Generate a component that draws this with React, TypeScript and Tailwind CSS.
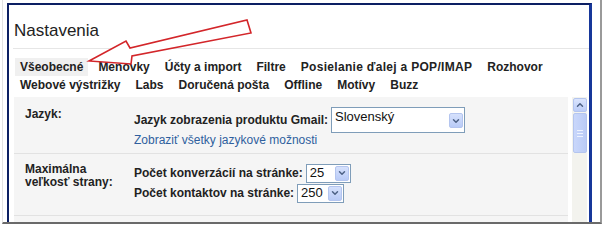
import { ChevronDown, ChevronUp } from 'lucide-react';

const tabRows = [
  ['Všeobecné', 'Menovky', 'Účty a import', 'Filtre', 'Posielanie ďalej a POP/IMAP', 'Rozhovor'],
  ['Webové výstrižky', 'Labs', 'Doručená pošta', 'Offline', 'Motívy', 'Buzz'],
];

const SelectBox = ({ value, className }: { value: string; className: string }) => (
  <div className={`flex justify-between items-center bg-white border border-[#7f9db9] pl-[3px] pr-[1px] ${className}`}>
    <span className="self-start font-normal text-[13px] leading-[16px] text-[#111]">{value}</span>
    <span className="flex items-center justify-center w-[14px] h-[15px] rounded-[2px] border border-[#b4c5ef] bg-gradient-to-b from-[#d6e1fc] to-[#b9cbf7]">
      <ChevronDown className="w-[10px] h-[10px] text-[#4d6185]" strokeWidth={3.5} />
    </span>
  </div>
);

const App = () => {
  return (
    <div className="w-[604px] h-[226px] bg-white pl-[2px] font-['Liberation_Sans',Arial,sans-serif] text-[#222]">
      <div className="relative w-[600px] h-[224px] border-l border-l-[#e2e2e2] border-r-2 border-r-[#9a9a9a] border-b-2 border-b-[#6a6a6a] pl-[4px] pt-[3px]">
        {/* window frame */}
        <div className="flex flex-col w-[585px] h-[219px] border-t-2 border-l-2 border-[#0c1f63] border-r-[3px] border-r-[#17379a] bg-white overflow-hidden">
          <h1 className="pl-[5px] pt-[16px] pb-[7px] text-[17px] leading-[20px] font-normal text-[#222]">Nastavenia</h1>
          <div className="ml-[4px] h-px bg-[#e6e6e6]" />

          {/* Tabs */}
          <div className="pl-[6px] pt-[9px] flex flex-col">
            {tabRows.map((row, i) => (
              <div key={i} className="flex gap-[5px] h-[18px] items-center">
                {row.map((tab) => (
                  <span
                    key={tab}
                    className={
                      'px-[5px] h-[18px] leading-[18px] text-[12px] font-bold whitespace-nowrap ' +
                      (tab === 'Všeobecné' ? 'bg-[#f0f0f0] ' : '') +
                      (tab.startsWith('Posielanie') ? 'tracking-[0.3px]' : '')
                    }
                  >
                    {tab}
                  </span>
                ))}
              </div>
            ))}
          </div>

          {/* Content + scrollbar */}
          <div className="mt-[3px] flex flex-1 min-h-0">
            <div className="ml-[5px] w-[554px] bg-[#f5f5f5] text-[12px] font-bold">
              {/* Jazyk */}
              <div className="flex pl-[11px] pt-[10px] pb-[6px] border-b border-[#e2e2e2]">
                <div className="w-[109px] leading-[14px]">Jazyk:</div>
                <div className="flex flex-col">
                  <div className="flex items-center gap-[3px]">
                    <span>Jazyk zobrazenia produktu Gmail:</span>
                    <SelectBox value="Slovenský" className="w-[134px] h-[26px] pt-px" />
                  </div>
                  <a className="font-normal leading-[14px] text-[#2f5f9e]">Zobraziť všetky jazykové možnosti</a>
                </div>
              </div>

              {/* Max page size */}
              <div className="flex pl-[11px] pt-[9px] pb-[12px] border-b border-[#e2e2e2]">
                <div className="w-[109px] leading-[13px]">
                  <div>Maximálna</div>
                  <div>veľkosť strany:</div>
                </div>
                <div className="flex flex-col">
                  <div className="flex items-center gap-[3px] h-[20px]">
                    <span>Počet konverzácií na stránke:</span>
                    <SelectBox value="25" className="w-[45px] h-[19px]" />
                  </div>
                  <div className="flex items-center gap-[3px] h-[20px]">
                    <span>Počet kontaktov na stránke:</span>
                    <SelectBox value="250" className="w-[47px] h-[19px]" />
                  </div>
                </div>
              </div>
            </div>

            {/* Scrollbar */}
            <div className="ml-[4px] w-[15px] bg-[#f3f3ee] flex flex-col items-center pt-px gap-px">
              <span className="flex items-center justify-center w-[14px] h-[14px] rounded-[2px] border border-[#b4c5ef] bg-gradient-to-b from-[#dbe5fd] to-[#bccdf8]">
                <ChevronUp className="w-[10px] h-[10px] text-[#4d6185]" strokeWidth={3.5} />
              </span>
              <span className="flex flex-col items-center justify-center gap-[2px] w-[14px] h-[40px] rounded-[2px] border border-[#b4c5ef] bg-gradient-to-r from-[#c9d7fb] to-[#bacbf6]">
                <span className="w-[6px] h-px bg-[#eef3ff]" />
                <span className="w-[6px] h-px bg-[#eef3ff]" />
                <span className="w-[6px] h-px bg-[#eef3ff]" />
              </span>
            </div>
          </div>
        </div>

        {/* Red annotation arrow */}
        <svg className="absolute left-[-2px] top-0 pointer-events-none" width="604" height="226" viewBox="0 0 604 226">
          <polygon
            points="88,61 125,41 129,48 246,20 250,33 131,56 130,64"
            fill="#ffffff"
            stroke="#d3262a"
            strokeWidth="1.6"
            strokeLinejoin="miter"
          />
        </svg>
      </div>
    </div>
  );
};

export default App;
